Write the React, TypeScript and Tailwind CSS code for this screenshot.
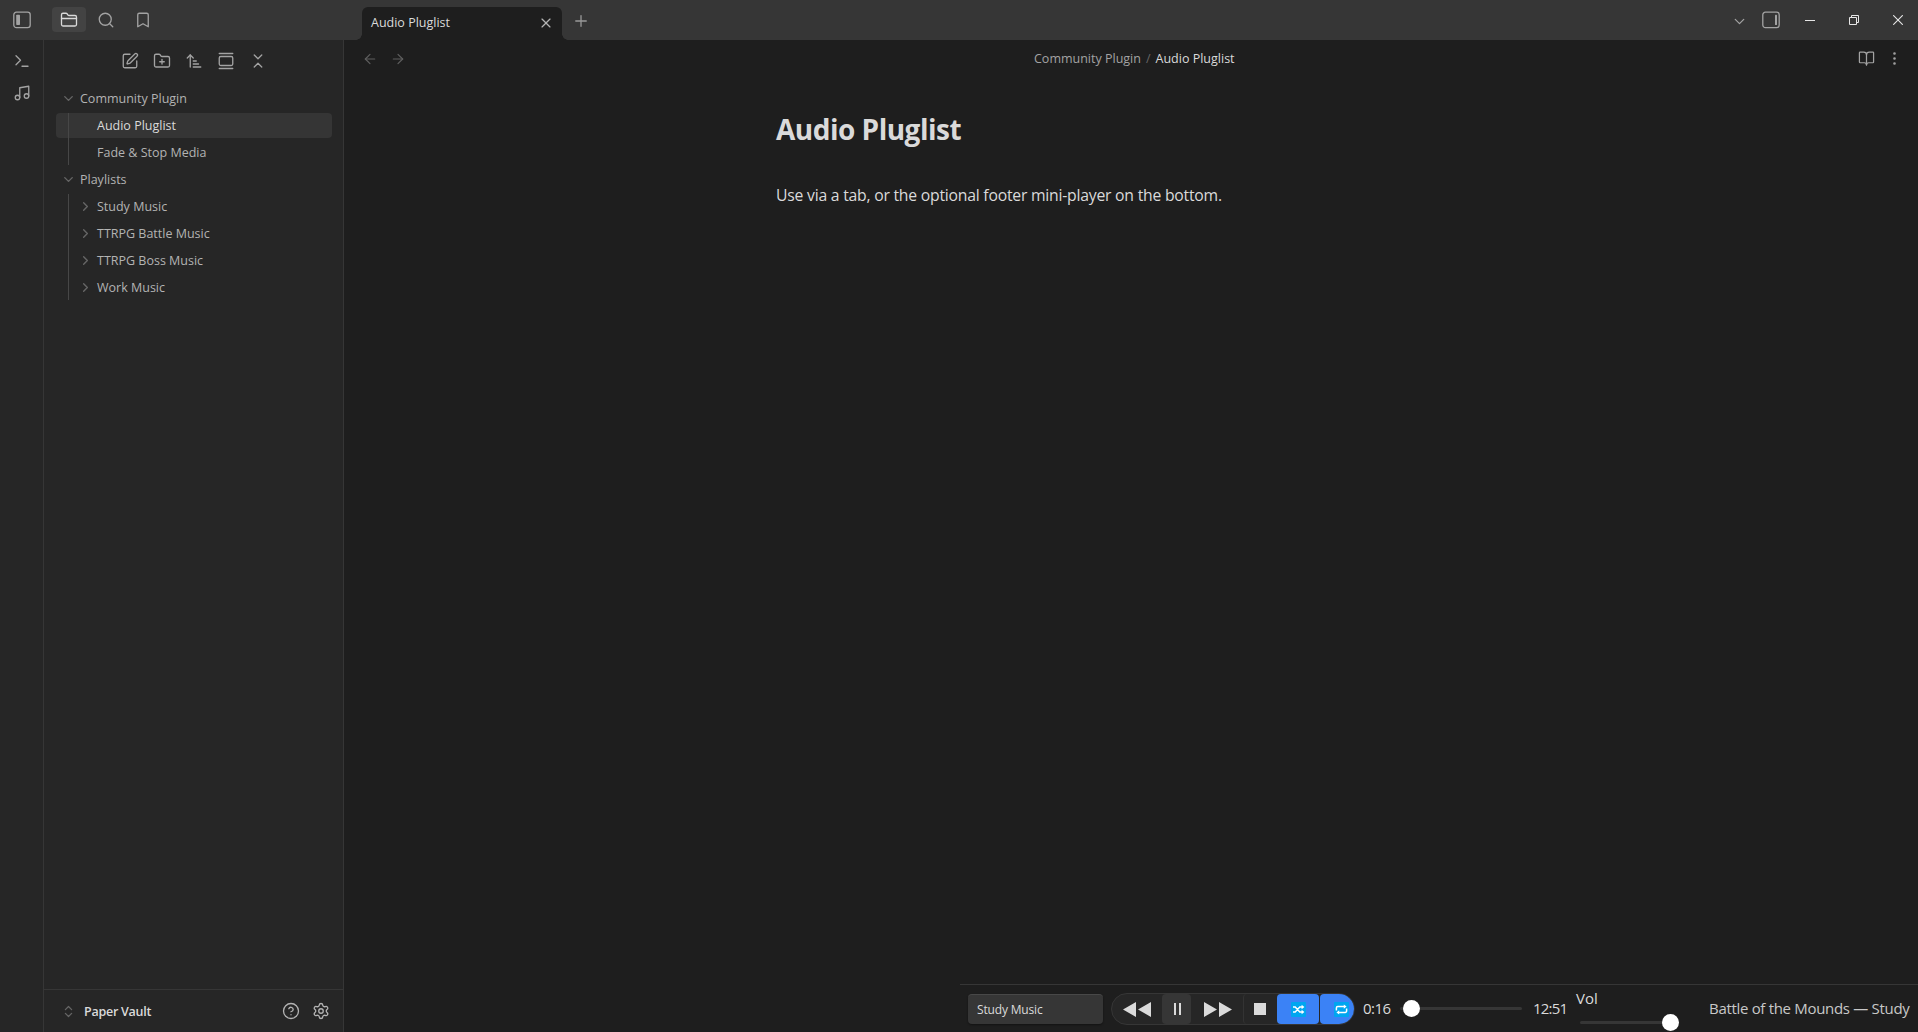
import type { ReactNode } from "react";
import {
  ArrowLeft, ArrowRight, ArrowUpNarrowWide, Bookmark, BookOpen, ChevronDown, ChevronRight,
  ChevronsDownUp, ChevronsUpDown, CircleQuestionMark, EllipsisVertical, FolderClosed, FolderPlus,
  GalleryVertical, Music, Plus, Search, Settings, SquarePen, Terminal, X,
} from "lucide-react";

const iconProps = { size: 18, strokeWidth: 1.75 };

function IconCell({ children, className = "w-8" }: { children: ReactNode; className?: string }) {
  return <div className={"flex shrink-0 items-center justify-center " + className}>{children}</div>;
}

function PanelIcon({ side }: { side: "left" | "right" }) {
  return (
    <svg width="18" height="18" viewBox="0 0 18 18" fill="none" stroke="currentColor" strokeWidth="1.3">
      <rect x="0.8" y="1.2" width="16.4" height="15.4" rx="2.6" />
      {side === "left" ? (
        <rect x="3.2" y="3.8" width="3.8" height="10.2" rx="0.8" fill="currentColor" stroke="none" />
      ) : (
        <rect x="13" y="3.8" width="2" height="10.2" rx="0.6" fill="currentColor" stroke="none" />
      )}
    </svg>
  );
}

function TitleBar() {
  return (
    <header className="flex h-10 shrink-0 bg-[#363636] text-[#a3a3a3]">
      <div className="flex w-[344px] items-start pt-[7px]">
        <IconCell className="h-[25px] w-11"><PanelIcon side="left" /></IconCell>
        <div className="ml-2 flex h-[25px] w-[34px] items-center justify-center rounded bg-[#434343] text-[#dadada]">
          <FolderClosed {...iconProps} />
        </div>
        <IconCell className="ml-[3px] h-[26px] w-[34px]"><Search {...iconProps} /></IconCell>
        <IconCell className="ml-[3px] h-[26px] w-[34px]"><Bookmark {...iconProps} /></IconCell>
      </div>
      <div className="relative ml-[18px] mt-[7px] flex h-[33px] w-[200px] items-center rounded-t-md bg-[#1e1e1e] pl-[9px] pr-[7px]">
        <span className="absolute -left-1.5 bottom-0 size-1.5 bg-[radial-gradient(circle_at_0_0,transparent_5.5px,#1e1e1e_6px)]" />
        <span className="absolute -right-1.5 bottom-0 size-1.5 bg-[radial-gradient(circle_at_100%_0,transparent_5.5px,#1e1e1e_6px)]" />
        <span className="pb-px text-[12.5px] text-[#dadada]">Audio Pluglist</span>
        <X size={16} strokeWidth={1.75} className="mb-0.5 ml-auto mr-px text-[#b3b3b3]" />
      </div>
      <IconCell className="ml-[10px] h-[42px] w-[18px]"><Plus {...iconProps} className="text-[#999]" /></IconCell>
      <div className="ml-auto flex h-10 items-center">
        <IconCell className="mr-[14px] w-[18px] pt-0.5"><ChevronDown size={17} strokeWidth={1.75} /></IconCell>
        <IconCell className="mr-[25px] w-[18px]"><PanelIcon side="right" /></IconCell>
        <svg width="10" height="10" viewBox="0 0 10 10" className="mr-[34px]" fill="none" stroke="#e6e6e6">
          <path d="M0 5.5h10" />
        </svg>
        <svg width="10" height="10" viewBox="0 0 10 10" className="mr-[34px]" fill="none" stroke="#e6e6e6">
          <path d="M.5 2.5h7v7h-7zM2.5 2.5v-2h7v7h-2" />
        </svg>
        <svg width="10" height="10" viewBox="0 0 10 10" className="mr-[15px]" fill="none" stroke="#e6e6e6" strokeWidth="1.1">
          <path d="M.2.2l9.6 9.6M9.8.2L.2 9.8" />
        </svg>
      </div>
    </header>
  );
}

function FolderRow({ name, open }: { name: string; open?: boolean }) {
  return (
    <div className={"flex h-[25px] items-center " + (open ? "pl-[5px]" : "pl-[9px]")}>
      {open ? (
        <ChevronDown size={15} strokeWidth={2.2} className="text-[#666]" />
      ) : (
        <ChevronRight size={15} strokeWidth={2.2} className="text-[#666]" />
      )}
      <span className="ml-1 pt-px text-[12.5px]">{name}</span>
    </div>
  );
}

function Sidebar() {
  return (
    <aside className="flex w-[300px] shrink-0 flex-col border-r border-[#363636] bg-[#262626] text-[#b3b3b3]">
      <nav className="flex h-[46px] items-center justify-center pb-1 text-[#a3a3a3]">
        <IconCell><SquarePen {...iconProps} /></IconCell>
        <IconCell><FolderPlus {...iconProps} /></IconCell>
        <IconCell><ArrowUpNarrowWide {...iconProps} /></IconCell>
        <IconCell><GalleryVertical {...iconProps} /></IconCell>
        <IconCell><ChevronsDownUp {...iconProps} /></IconCell>
      </nav>
      <div className="flex flex-1 flex-col gap-0.5 pl-3 pr-[11px]">
        <FolderRow name="Community Plugin" open />
        <div className="relative flex flex-col gap-0.5">
          <div className="flex h-[25px] items-center rounded bg-[#353535] pl-[41px] text-[#dadada]">
            <span className="pt-px text-[12.5px]">Audio Pluglist</span>
          </div>
          <div className="flex h-[25px] items-center pl-[41px]">
            <span className="pt-px text-[12.5px]">Fade &amp; Stop Media</span>
          </div>
          <span className="absolute inset-y-0 left-3 w-px bg-[#474747]" />
        </div>
        <FolderRow name="Playlists" open />
        <div className="ml-3 flex flex-col gap-0.5 border-l border-[#474747]">
          <FolderRow name="Study Music" />
          <FolderRow name="TTRPG Battle Music" />
          <FolderRow name="TTRPG Boss Music" />
          <FolderRow name="Work Music" />
        </div>
      </div>
      <footer className="flex h-[43px] items-center border-t border-[#363636] pl-[17px] pr-[13px]">
        <ChevronsUpDown size={15} strokeWidth={2} className="text-[#666]" />
        <span className="ml-2 pt-0.5 text-[12.5px] font-semibold tracking-[-0.25px] text-[#dadada]">Paper Vault</span>
        <CircleQuestionMark {...iconProps} className="ml-auto" />
        <Settings {...iconProps} className="ml-3" />
      </footer>
    </aside>
  );
}

function Slider({ width, thumb }: { width: string; thumb: string }) {
  return (
    <div className={"relative h-[3px] rounded-sm bg-[#363636] " + width}>
      <span className={"absolute -top-[7px] size-[17px] rounded-full bg-white " + thumb} />
    </div>
  );
}

function Triangles({ flip }: { flip?: boolean }) {
  return (
    <svg width="28" height="15" viewBox="0 0 28 15" fill="#dadada">
      {flip ? <path d="M0 0v15l13-7.5zM15 0v15l13-7.5z" /> : <path d="M13 0v15L0 7.5zM28 0v15L15 7.5z" />}
    </svg>
  );
}

function Badge({ children }: { children: ReactNode }) {
  return (
    <svg width="15" height="15" viewBox="0 0 15 15" fill="none" stroke="#fff" strokeWidth="1.5">
      <rect width="15" height="15" rx="1" fill="#00a6f0" stroke="none" />
      {children}
    </svg>
  );
}

function Player() {
  return (
    <div className="absolute bottom-0 left-[616px] right-0 flex h-12 border-t border-[#363636] bg-[#1e1e1e] text-[#dadada]">
      <div className="ml-2 mt-[9px] flex h-[30px] w-[135px] items-center rounded border-t border-[#484848] bg-[#363636] pl-[9px] shadow-[0_1px_2px_#0006]">
        <span className="text-[12px] tracking-[-0.17px]">Study Music</span>
      </div>
      <div className="ml-2 mt-2 flex h-8 w-[244px] gap-px overflow-hidden rounded-full border border-[#363636] bg-[#262626]">
        <div className="flex w-[49px] items-center justify-center"><Triangles /></div>
        <div className="flex w-[29px] items-center justify-center gap-[3px] rounded bg-[#363636] pl-0.5">
          <span className="h-3 w-0.5 bg-[#dadada]" />
          <span className="h-3 w-0.5 bg-[#dadada]" />
        </div>
        <div className="flex w-[50px] items-center justify-center pl-px"><Triangles flip /></div>
        <div className="flex w-[33px] items-center justify-center rounded border-l border-[#333]">
          <span className="mr-px size-[12px] bg-[#dadada]" />
        </div>
        <div className="flex w-[42px] items-center justify-center rounded bg-[#3b82f6]">
          <Badge>
            <path d="M2 5h2.2l4.6 5h2.6M2 10h2.2l4.6-5h2.6" />
            <path d="M10.6 2.8L13.4 5l-2.8 2.2zM10.6 7.8l2.8 2.2-2.8 2.2z" fill="#fff" stroke="none" />
          </Badge>
        </div>
        <div className="flex flex-1 items-center rounded-l bg-[#3b82f6] pl-[14px]">
          <Badge>
            <path d="M2.4 8.5V6a1.4 1.4 0 0 1 1.4-1.4h6.4M12.6 6.5V9a1.4 1.4 0 0 1-1.4 1.4H4.8" />
            <path d="M9.8 2.4l2.8 2.2-2.8 2.2zM5.2 8.2l-2.8 2.2 2.8 2.2z" fill="#fff" stroke="none" />
          </Badge>
        </div>
      </div>
      <span className="ml-2 mt-3 w-[37px] text-[15px] leading-[22px] tracking-[-0.5px]">0:16</span>
      <div className="mt-[22px]"><Slider width="w-[122px]" thumb="left-[3px]" /></div>
      <span className="ml-[11px] mt-3 w-[43px] text-[15px] leading-[22px] tracking-[-0.8px]">12:51</span>
      <div className="flex w-[133px] flex-col">
        <span className="mt-0.5 self-start text-[15px] leading-[22px]">Vol</span>
        <div className="ml-1 mt-3"><Slider width="w-[99px]" thumb="right-0" /></div>
      </div>
      <span className="mt-3 whitespace-nowrap text-[15px] leading-[22px] tracking-[-0.31px] text-[#c8c8c8]">Battle of the Mounds — Study</span>
    </div>
  );
}

export default function App() {
  return (
    <div className="flex h-screen w-screen flex-col overflow-hidden bg-[#1e1e1e] font-['Open_Sans','Noto_Sans',sans-serif]">
      <TitleBar />
      <div className="flex min-h-0 flex-1">
        <div className="flex w-11 shrink-0 flex-col items-center gap-[14px] border-r border-[#363636] bg-[#262626] pt-3 text-[#a3a3a3]">
          <Terminal {...iconProps} />
          <Music {...iconProps} />
        </div>
        <Sidebar />
        <main className="relative flex min-w-0 flex-1 flex-col">
          <div className="flex h-[37px] items-center pl-[18px] pr-[15px] text-[#a3a3a3]">
            <ArrowLeft size={16} strokeWidth={1.75} className="text-[#5f5f5f]" />
            <ArrowRight size={16} strokeWidth={1.75} className="ml-3 text-[#5f5f5f]" />
            <div className="ml-[628px] flex pt-px text-[12.5px]">
              <span>Community Plugin</span>
              <span className="mx-[5px] text-[#666]">/</span>
              <span className="text-[#dadada]">Audio Pluglist</span>
            </div>
            <BookOpen size={17} strokeWidth={1.75} className="ml-auto" />
            <EllipsisVertical size={17} strokeWidth={1.75} className="ml-[11px]" />
          </div>
          <article className="ml-[432px] text-[#dadada]">
            <h1 className="mt-[34px] text-[28px] font-bold leading-9 tracking-[-0.5px]">Audio Pluglist</h1>
            <p className="mt-9 text-[15.75px] leading-6 tracking-[-0.23px]">Use via a tab, or the optional footer mini-player on the bottom.</p>
          </article>
          <Player />
        </main>
      </div>
    </div>
  );
}
